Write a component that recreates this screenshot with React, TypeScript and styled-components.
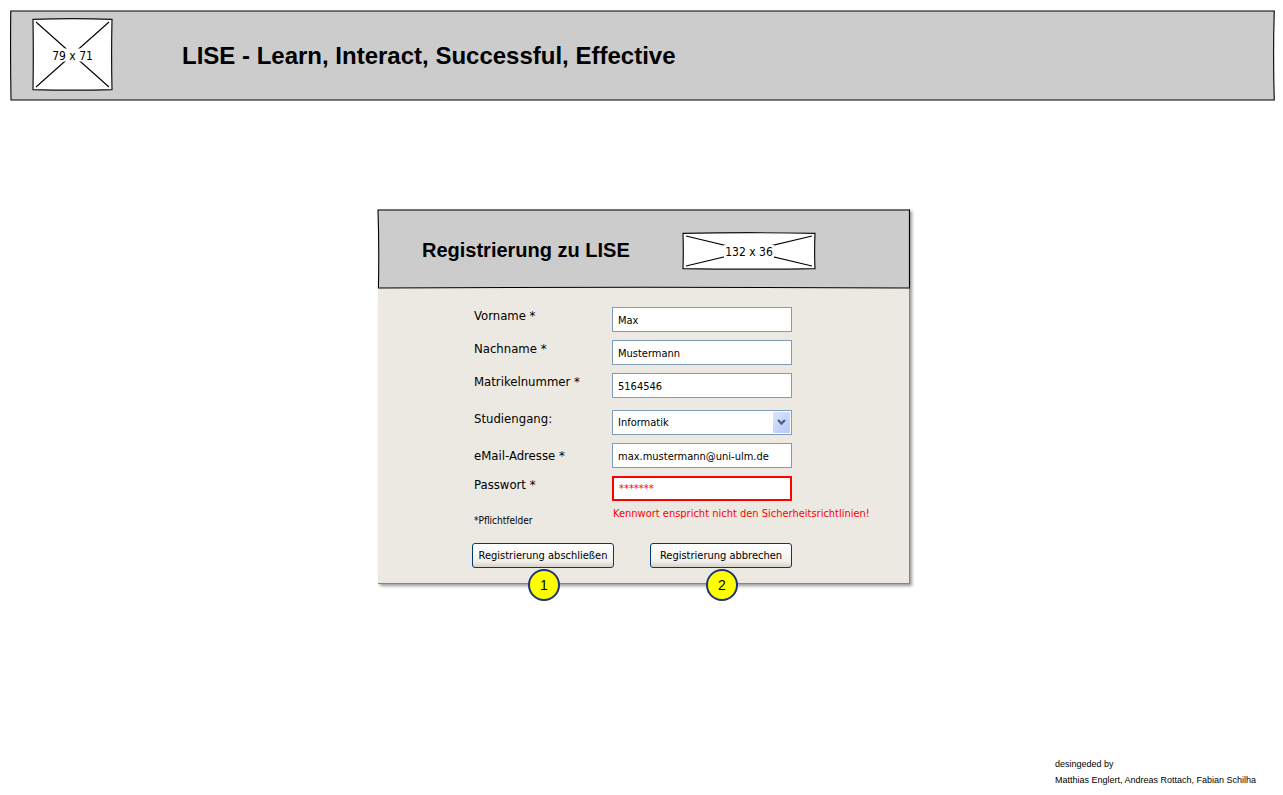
import React from 'react';
import styled, { createGlobalStyle } from 'styled-components';

const uiFont = '"DejaVu Sans Condensed", "DejaVu Sans", sans-serif';
const headingFont = '"Liberation Sans", Arial, sans-serif';

const GlobalStyle = createGlobalStyle`
  *, *::before, *::after {
    box-sizing: border-box;
  }
  body {
    margin: 0;
    background: #fff;
    color: #000;
    font-family: ${uiFont};
    font-size: 12px;
    line-height: 16px;
  }
`;

const Page = styled.div`
  display: flex;
  flex-direction: column;
  min-height: 100vh;
  padding: 10px 8px 7px 10px;
`;

const TopBar = styled.header`
  position: relative;
  display: flex;
  align-items: center;
  height: 91px;
  padding: 0 0 2px 22px;
`;

const SiteTitle = styled.h1`
  position: relative;
  margin: 2px 0 0 69px;
  font: bold 24px/28px ${headingFont};
`;

const Main = styled.main`
  flex: 1;
  padding: 108px 0 40px 3px;
`;

const Card = styled.section`
  width: 532px;
  max-width: 100%;
  margin: 0 auto;
  background: #ece9e2;
  border-right: 1px solid #858480;
  border-bottom: 1px solid #858480;
  box-shadow: 2px 2px 3px rgba(0, 0, 0, 0.4);
`;

const CardHeader = styled.header`
  position: relative;
  display: flex;
  align-items: center;
  height: 80px;
  margin-right: -1px;
  padding: 3px 94px 0 44px;
  justify-content: space-between;
`;

const CardTitle = styled.h2`
  position: relative;
  margin: 0 0 2px;
  font: bold 20px/24px ${headingFont};
`;

const Form = styled.form`
  padding: 18px 20px 15px 94px;
`;

const Fields = styled.div`
  display: flex;
  flex-direction: column;
  gap: 8px;
`;

const Row = styled.div<{ $spaced?: boolean; $centered?: boolean }>`
  display: grid;
  grid-template-columns: 138px 180px;
  align-items: ${(p) => (p.$centered ? 'center' : 'start')};
  padding-top: ${(p) => (p.$spaced ? '4px' : '0')};
  padding-left: 2px;
`;

const Label = styled.label`
  font-size: 13px;
  line-height: 18px;
`;

const TextBox = styled.input<{ $invalid?: boolean }>`
  width: 100%;
  height: 25px;
  padding: ${(p) => (p.$invalid ? '0 5px' : '1px 5px 0')};
  border: ${(p) => (p.$invalid ? '2px solid #f00' : '1px solid #7f9db9')};
  background: #fff;
  color: ${(p) => (p.$invalid ? '#f00' : '#000')};
  font: 11px/16px ${uiFont};
  outline: none;
`;

const SelectWrap = styled.div`
  position: relative;
`;

const Select = styled.select`
  display: block;
  width: 100%;
  height: 25px;
  padding: 1px 22px 0 5px;
  appearance: none;
  border: 1px solid #7f9db9;
  border-radius: 0;
  background: #fff;
  color: #000;
  font: 11px/16px ${uiFont};
`;

const SelectArrow = styled.span`
  position: absolute;
  top: 2px;
  right: 2px;
  bottom: 2px;
  display: flex;
  align-items: center;
  justify-content: center;
  width: 17px;
  border-radius: 1px;
  background: linear-gradient(135deg, #dbe5fd, #b3c9f9);
  pointer-events: none;
`;

const Notes = styled.div`
  display: grid;
  grid-template-columns: 139px 1fr;
  padding: 5px 0 0 2px;
`;

const RequiredNote = styled.p`
  margin: 0;
  padding-top: 7px;
  font-size: 10px;
`;

const ErrorText = styled.p`
  margin: 0;
  color: #f00;
  font-size: 11px;
  white-space: nowrap;
`;

const Actions = styled.div`
  display: flex;
  gap: 36px;
  margin-top: 14px;
`;

const Action = styled.div`
  position: relative;
`;

const Button = styled.button`
  display: block;
  width: 142px;
  height: 25px;
  padding: 0;
  border: 1px solid #003c74;
  border-radius: 3px;
  background: linear-gradient(#fff, #f1f0eb 75%, #d8d3c8);
  color: #000;
  font: 11px/16px ${uiFont};
`;

const Badge = styled.span`
  position: absolute;
  top: 26px;
  left: 56px;
  display: flex;
  align-items: center;
  justify-content: center;
  width: 32px;
  height: 32px;
  border: 2px solid #1f3477;
  border-radius: 50%;
  background: #ff0;
  font: 14px/16px ${headingFont};
`;

const Footer = styled.footer`
  align-self: flex-end;
  width: 220px;
  font: 9px/16px ${headingFont};
  white-space: nowrap;

  p {
    margin: 0;
  }
`;

const Outline = styled.svg`
  position: absolute;
  inset: 0;
  width: 100%;
  height: 100%;
  overflow: visible;
`;

const PictureFrame = styled.svg`
  position: relative;
  display: block;
  flex: none;
  font: 12px ${uiFont};
`;

/* Hand-drawn rectangle that stretches with its panel. */
function SketchOutline({ height, d }: { height: number; d: string }) {
  return (
    <Outline viewBox={`0 0 1000 ${height}`} preserveAspectRatio="none" aria-hidden="true">
      <path d={d} fill="#ccc" stroke="#000" strokeWidth="1.1" vectorEffect="non-scaling-stroke" />
    </Outline>
  );
}

function Placeholder({ width, height, gap }: { width: number; height: number; gap: number }) {
  const w = width + 2;
  const h = height + 2;
  const cx = w / 2;
  const cy = h / 2;
  return (
    <PictureFrame width={w} height={h} viewBox={`0 0 ${w} ${h}`} role="img" aria-label="Logo">
      <path
        d={`M1 1.4 Q${cx} 0 ${w - 1} 1.4 Q${w - 1.8} ${cy} ${w - 1} ${h - 1.4} Q${cx} ${h - 0.2} 1 ${h - 1.4} Q1.6 ${cy} 1 1.4Z`}
        fill="#fff"
        stroke="#111"
        strokeWidth="1.2"
      />
      <path
        d={`M4 4 L${w - 4} ${h - 4} M${w - 4} 4 L4 ${h - 4}`}
        stroke="#000"
        strokeWidth="1.1"
      />
      <rect x={cx - gap / 2} y={cy - 6} width={gap} height="13" fill="#fff" />
      <text x={cx} y={cy + 5} textAnchor="middle">
        {width} x {height}
      </text>
    </PictureFrame>
  );
}

function Chevron() {
  return (
    <svg width="9" height="7" viewBox="0 0 9 7" aria-hidden="true">
      <path d="M1 1 L4.5 4.5 L8 1" fill="none" stroke="#4d6185" strokeWidth="2.4" />
    </svg>
  );
}

export default function App() {
  return (
    <>
      <GlobalStyle />
      <Page>
        <TopBar>
          <SketchOutline
            height={91}
            d="M0.6 1 L999.4 1 Q998.4 45 999.4 90 L0.8 90 Q0.2 45 0.6 1Z"
          />
          <Placeholder width={79} height={71} gap={42} />
          <SiteTitle>LISE - Learn, Interact, Successful, Effective</SiteTitle>
        </TopBar>

        <Main>
          <Card>
            <CardHeader>
              <SketchOutline
                height={80}
                d="M0 1 L999 1 L999 79 Q500 77.6 0.8 79 Q2.4 40 0 1Z"
              />
              <CardTitle>Registrierung zu LISE</CardTitle>
              <Placeholder width={132} height={36} gap={50} />
            </CardHeader>

            <Form onSubmit={(e) => e.preventDefault()}>
              <Fields>
                <Row>
                  <Label htmlFor="vorname">Vorname *</Label>
                  <TextBox id="vorname" defaultValue="Max" />
                </Row>
                <Row>
                  <Label htmlFor="nachname">Nachname *</Label>
                  <TextBox id="nachname" defaultValue="Mustermann" />
                </Row>
                <Row>
                  <Label htmlFor="matrikel">Matrikelnummer *</Label>
                  <TextBox id="matrikel" defaultValue="5164546" />
                </Row>
                <Row $spaced>
                  <Label htmlFor="studiengang">Studiengang:</Label>
                  <SelectWrap>
                    <Select id="studiengang" defaultValue="Informatik">
                      <option>Informatik</option>
                    </Select>
                    <SelectArrow>
                      <Chevron />
                    </SelectArrow>
                  </SelectWrap>
                </Row>
                <Row $centered>
                  <Label htmlFor="email">eMail-Adresse *</Label>
                  <TextBox id="email" defaultValue="max.mustermann@uni-ulm.de" />
                </Row>
                <Row>
                  <Label htmlFor="passwort">Passwort *</Label>
                  <TextBox
                    id="passwort"
                    $invalid
                    aria-invalid="true"
                    aria-describedby="passwort-fehler"
                    defaultValue="*******"
                  />
                </Row>
              </Fields>

              <Notes>
                <RequiredNote>*Pflichtfelder</RequiredNote>
                <ErrorText id="passwort-fehler">
                  Kennwort enspricht nicht den Sicherheitsrichtlinien!
                </ErrorText>
              </Notes>

              <Actions>
                <Action>
                  <Button type="submit">Registrierung abschließen</Button>
                  <Badge>1</Badge>
                </Action>
                <Action>
                  <Button type="button">Registrierung abbrechen</Button>
                  <Badge>2</Badge>
                </Action>
              </Actions>
            </Form>
          </Card>
        </Main>

        <Footer>
          <p>desingeded by</p>
          <p>Matthias Englert, Andreas Rottach, Fabian Schilha</p>
        </Footer>
      </Page>
    </>
  );
}
